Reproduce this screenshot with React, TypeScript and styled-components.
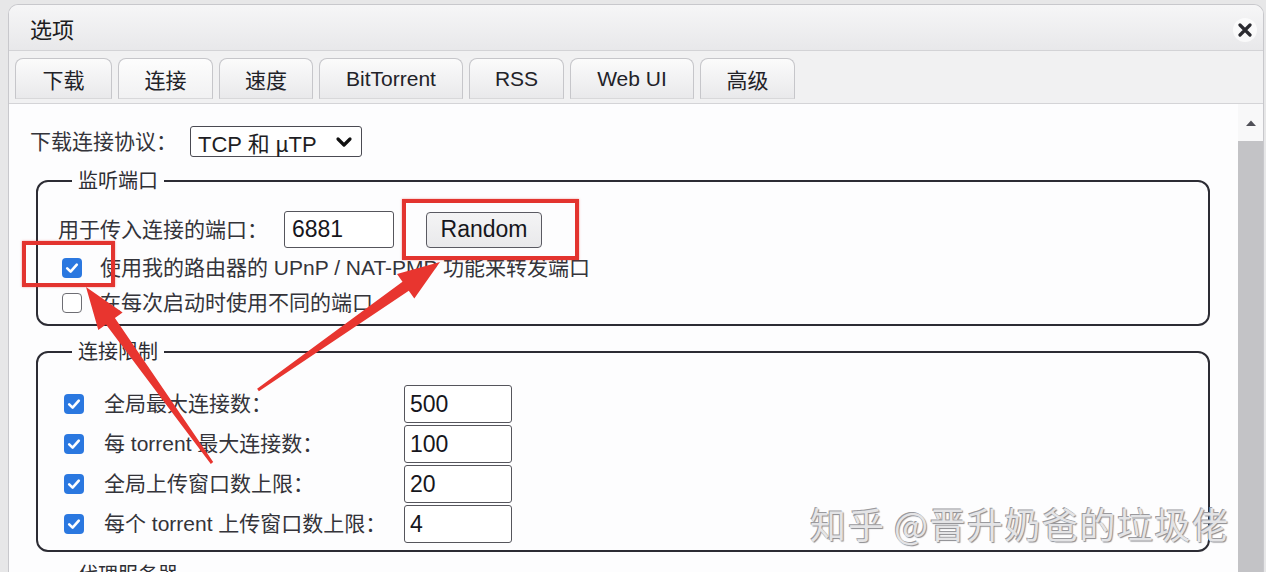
import React from "react";
import styled, { createGlobalStyle } from "styled-components";

const GlobalStyle = createGlobalStyle`
  html, body { margin: 0; padding: 0; background: #e7e7e8; }
  body {
    font-family: "Liberation Sans", Arial, "Noto Sans CJK SC", sans-serif;
    color: #2c2c32;
  }
  * { box-sizing: border-box; }
`;

const Page = styled.div`
  position: relative;
  width: 1266px;
  height: 572px;
  overflow: hidden;
  display: flex;
  padding: 4px 2px 0 8px;
  background: #e7e7e8;
`;

const Window = styled.div`
  flex: 1;
  min-width: 0;
  display: flex;
  flex-direction: column;
  border: 1px solid #c8c8cc;
  border-bottom: none;
  border-radius: 10px 10px 0 0;
  background: #f0f0f1;
  overflow: hidden;
`;

const TitleBar = styled.div`
  height: 46px;
  flex: none;
  display: flex;
  align-items: center;
  justify-content: space-between;
  padding: 0 6px 0 21px;
  background: linear-gradient(#f6f6f7, #e8e8ea);
  border-bottom: 1px solid #d3d3d6;
`;

const Title = styled.span`
  font-size: 22px;
  color: #1c1c20;
`;

const CloseButton = styled.span`
  width: 24px;
  height: 24px;
  margin-top: 4px;
  border-radius: 50%;
  background: rgba(255, 255, 255, 0.7);
  display: flex;
  align-items: center;
  justify-content: center;
`;

const TabBar = styled.div`
  height: 53px;
  flex: none;
  display: flex;
  align-items: flex-end;
  gap: 6px;
  padding: 0 0 4px 6px;
  background: #f1f1f2;
  border-bottom: 1px solid #d4d4d7;
`;

const Tab = styled.div<{ $active?: boolean; $w: number }>`
  width: ${(p) => p.$w}px;
  height: 41px;
  display: flex;
  align-items: center;
  justify-content: center;
  font-size: 21px;
  color: #222228;
  border: 1px solid #c6c6ca;
  border-bottom-color: #d8d8da;
  border-radius: 8px 8px 0 0;
  background: ${(p) =>
    p.$active ? "linear-gradient(#fdfdfd, #f1f1f2)" : "linear-gradient(#fbfbfb, #e9e9eb)"};
`;

const Content = styled.div`
  flex: 1;
  min-height: 0;
  display: flex;
  background: #fdfdfe;
`;

const Main = styled.div`
  flex: 1;
  min-width: 0;
  padding: 22px 28px 0 21px;
`;

const ProtocolRow = styled.div`
  display: flex;
  align-items: center;
  gap: 13px;
  height: 31px;
`;

const Label = styled.span`
  font-size: 21px;
  line-height: 26px;
  color: #34343a;
  white-space: nowrap;
`;

const SelectBox = styled.div`
  width: 172px;
  height: 31px;
  display: flex;
  align-items: center;
  justify-content: space-between;
  padding: 0 8px 0 7px;
  border: 1.5px solid #4a4a52;
  border-radius: 3px;
  font-size: 22px;
  color: #1e1e24;
  background: #fff;
`;

const Fieldset = styled.fieldset<{ $gap: number }>`
  margin: ${(p) => p.$gap}px 0 0 6px;
  padding: 0 20px;
  border: 2px solid #2c2c34;
  border-radius: 12px;
  min-width: 0;
`;

const Legend = styled.legend`
  margin-left: 14px;
  padding: 0 6px;
  font-size: 20px;
  line-height: 26px;
  color: #2e2e34;
`;

const PortRow = styled.div`
  display: flex;
  align-items: center;
  height: 37px;
  margin-top: 17px;
`;

const TextInput = styled.input<{ $w: number; $h: number; $pad: number }>`
  width: ${(p) => p.$w}px;
  height: ${(p) => p.$h}px;
  padding: 0 ${(p) => p.$pad}px;
  border: 1.5px solid #55555c;
  border-radius: 3px;
  font-family: "Liberation Sans", Arial, sans-serif;
  font-size: 23px;
  color: #16161c;
  background: #fff;
  outline: none;
`;

const PortInput = styled(TextInput)`
  margin-left: 16px;
`;

const Button = styled.button`
  margin-left: 32px;
  width: 116px;
  height: 36px;
  padding: 0;
  border: 1.5px solid #5a5a62;
  border-radius: 4px;
  background: linear-gradient(#f4f4f5, #e9e9eb);
  font-family: "Liberation Sans", Arial, sans-serif;
  font-size: 23px;
  color: #16161c;
`;

const CheckList = styled.div`
  padding: 2px 0 4px 4px;
`;

const CheckRow = styled.div`
  display: flex;
  align-items: center;
  gap: 18px;
  height: 35px;
`;

const Box = styled.span<{ $checked: boolean }>`
  flex: none;
  width: 20px;
  height: 20px;
  border-radius: 4px;
  display: flex;
  align-items: center;
  justify-content: center;
  background: ${(p) => (p.$checked ? "#2b78e0" : "#fff")};
  border: ${(p) => (p.$checked ? "none" : "1.5px solid #6e6e74")};
`;

const LimitGrid = styled.div`
  margin-top: 19px;
  padding: 0 0 6px 6px;
  display: grid;
  grid-template-columns: 20px 280px 108px;
  grid-auto-rows: 40px;
  column-gap: 20px;
  align-items: center;
`;

const ScrollBar = styled.div`
  width: 25px;
  flex: none;
  display: flex;
  flex-direction: column;
  background: #f8f8f9;
`;

const ScrollUp = styled.div`
  height: 37px;
  display: flex;
  align-items: center;
  justify-content: center;
`;

const Thumb = styled.div`
  flex: 1;
  background: #c3c3c6;
`;

const RedBox = styled.div<{ $x: number; $y: number; $w: number; $h: number }>`
  position: absolute;
  left: ${(p) => p.$x}px;
  top: ${(p) => p.$y}px;
  width: ${(p) => p.$w}px;
  height: ${(p) => p.$h}px;
  border: 4px solid #e3342f;
  box-shadow: 0 0 2px rgba(227, 52, 47, 0.5);
  pointer-events: none;
`;

const ArrowLayer = styled.svg`
  position: absolute;
  left: 0;
  top: 0;
  pointer-events: none;
`;

const Watermark = styled.div`
  position: absolute;
  left: 810px;
  top: 500px;
  font-family: "Noto Sans CJK SC", sans-serif;
  font-size: 36px;
  line-height: 46px;
  letter-spacing: 1.5px;
  color: #e4e4e6;
  text-shadow: -1px -1px 0 #9a9a9e, 1px 1px 1px #8a8a8e;
  white-space: nowrap;
  pointer-events: none;
`;

const Brand = styled.span`
  letter-spacing: 2px;
  margin-right: 8px;
`;

function Checkbox({ checked }: { checked: boolean }) {
  return (
    <Box $checked={checked}>
      {checked && (
        <svg width="16" height="16" viewBox="0 0 16 16">
          <path d="M3.2 8.4 L6.6 11.6 L12.8 4.6" fill="none" stroke="#fff" strokeWidth="2.6" strokeLinecap="round" strokeLinejoin="round" />
        </svg>
      )}
    </Box>
  );
}

function arrowPoints(sx: number, sy: number, tx: number, ty: number) {
  const dx = tx - sx;
  const dy = ty - sy;
  const len = Math.hypot(dx, dy);
  const ux = dx / len;
  const uy = dy / len;
  const nx = -uy;
  const ny = ux;
  const headLen = 42;
  const headHalf = 15;
  const shaftHead = 5.5;
  const shaftTail = 1.5;
  const bx = tx - ux * headLen;
  const by = ty - uy * headLen;
  const pts: [number, number][] = [
    [sx + nx * shaftTail, sy + ny * shaftTail],
    [bx + nx * shaftHead, by + ny * shaftHead],
    [bx + nx * headHalf, by + ny * headHalf],
    [tx, ty],
    [bx - nx * headHalf, by - ny * headHalf],
    [bx - nx * shaftHead, by - ny * shaftHead],
    [sx - nx * shaftTail, sy - ny * shaftTail],
  ];
  return pts.map((p) => `${p[0].toFixed(1)},${p[1].toFixed(1)}`).join(" ");
}

const tabs = [
  { label: "下载", w: 97 },
  { label: "连接", w: 95 },
  { label: "速度", w: 94 },
  { label: "BitTorrent", w: 144 },
  { label: "RSS", w: 95 },
  { label: "Web UI", w: 124 },
  { label: "高级", w: 95 },
];

const limits = [
  { label: "全局最大连接数：", value: "500" },
  { label: "每 torrent 最大连接数：", value: "100" },
  { label: "全局上传窗口数上限：", value: "20" },
  { label: "每个 torrent 上传窗口数上限：", value: "4" },
];

export default function App() {
  return (
    <>
      <GlobalStyle />
      <Page>
        <Window>
          <TitleBar>
            <Title>选项</Title>
            <CloseButton>
              <svg width="14" height="14" viewBox="0 0 14 14">
                <path d="M2 2 L12 12 M12 2 L2 12" stroke="#2a2a30" strokeWidth="3.2" strokeLinecap="round" />
              </svg>
            </CloseButton>
          </TitleBar>
          <TabBar>
            {tabs.map((t) => (
              <Tab key={t.label} $w={t.w} $active={t.label === "连接"}>
                {t.label}
              </Tab>
            ))}
          </TabBar>
          <Content>
            <Main>
              <ProtocolRow>
                <Label>下载连接协议：</Label>
                <SelectBox>
                  <span>TCP 和 µTP</span>
                  <svg width="18" height="14" viewBox="0 0 18 14">
                    <path d="M3 4 L9 10 L15 4" fill="none" stroke="#111" strokeWidth="3.2" strokeLinecap="round" strokeLinejoin="round" />
                  </svg>
                </SelectBox>
              </ProtocolRow>

              <Fieldset $gap={11}>
                <Legend>监听端口</Legend>
                <PortRow>
                  <Label>用于传入连接的端口：</Label>
                  <PortInput $w={110} $h={37} $pad={7} value="6881" readOnly />
                  <Button>Random</Button>
                </PortRow>
                <CheckList>
                  <CheckRow>
                    <Checkbox checked />
                    <Label>使用我的路由器的 UPnP / NAT-PMP 功能来转发端口</Label>
                  </CheckRow>
                  <CheckRow>
                    <Checkbox checked={false} />
                    <Label>在每次启动时使用不同的端口</Label>
                  </CheckRow>
                </CheckList>
              </Fieldset>

              <Fieldset $gap={13}>
                <Legend>连接限制</Legend>
                <LimitGrid>
                  {limits.map((l) => (
                    <React.Fragment key={l.label}>
                      <Checkbox checked />
                      <Label>{l.label}</Label>
                      <TextInput $w={108} $h={38} $pad={5} value={l.value} readOnly />
                    </React.Fragment>
                  ))}
                </LimitGrid>
              </Fieldset>

              <Fieldset $gap={10}>
                <Legend>代理服务器</Legend>
              </Fieldset>
            </Main>
            <ScrollBar>
              <ScrollUp>
                <svg width="12" height="8" viewBox="0 0 12 8">
                  <path d="M1 7 L6 1.5 L11 7 Z" fill="#505058" />
                </svg>
              </ScrollUp>
              <Thumb />
            </ScrollBar>
          </Content>
        </Window>

        <RedBox $x={402} $y={199} $w={177} $h={61} />
        <RedBox $x={22} $y={241} $w={93} $h={46} />
        <ArrowLayer width="1266" height="572" viewBox="0 0 1266 572">
          <polygon points={arrowPoints(212, 463, 86, 287)} fill="#e8352f" />
          <polygon points={arrowPoints(258, 390, 440, 262)} fill="#e8352f" />
        </ArrowLayer>
        <Watermark>
          <Brand>知乎</Brand>@晋升奶爸的垃圾佬
        </Watermark>
      </Page>
    </>
  );
}
